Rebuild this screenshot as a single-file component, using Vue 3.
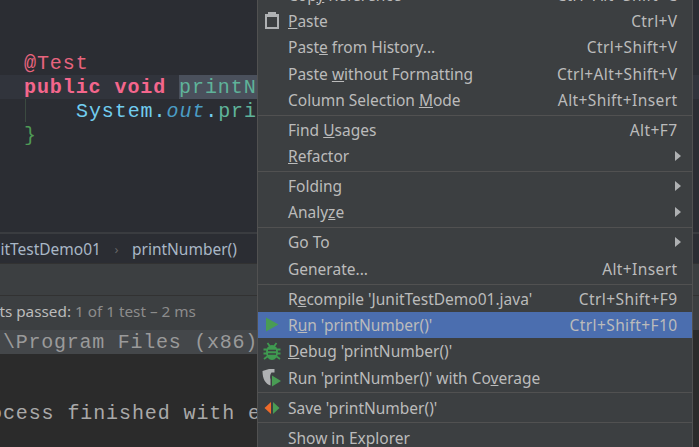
<script setup>
const groups = [
  [
    { pre: 'Cop', u: 'y', post: ' Reference', key: 'Ctrl+Alt+Shift+C' },
    { pre: '', u: 'P', post: 'aste', key: 'Ctrl+V', icon: 'paste' },
    { pre: 'Past', u: 'e', post: ' from History...', key: 'Ctrl+Shift+V' },
    { pre: 'Paste ', u: 'w', post: 'ithout Formatting', key: 'Ctrl+Alt+Shift+V' },
    { pre: 'Column Selection ', u: 'M', post: 'ode', key: 'Alt+Shift+Insert' },
  ],
  [
    { pre: 'Find ', u: 'U', post: 'sages', key: 'Alt+F7' },
    { pre: '', u: 'R', post: 'efactor', arrow: true },
  ],
  [
    { pre: 'Folding', u: '', post: '', arrow: true },
    { pre: 'Analy', u: 'z', post: 'e', arrow: true },
  ],
  [
    { pre: 'Go To', u: '', post: '', arrow: true },
    { pre: 'Generate...', u: '', post: '', key: 'Alt+Insert' },
  ],
  [
    { pre: 'R', u: 'e', post: "compile 'JunitTestDemo01.java'", key: 'Ctrl+Shift+F9' },
    { pre: 'R', u: 'u', post: "n 'printNumber()'", key: 'Ctrl+Shift+F10', icon: 'run', active: true },
    { pre: '', u: 'D', post: "ebug 'printNumber()'", icon: 'debug' },
    { pre: "Run 'printNumber()' with Co", u: 'v', post: 'erage', icon: 'coverage' },
  ],
  [{ pre: "Save 'printNumber()'", u: '', post: '', icon: 'save' }],
  [{ pre: 'Show in Explorer', u: '', post: '' }],
]
</script>

<template>
  <div class="ide">
    <section class="editor">
      <div class="code-line"><span class="anno">@Test</span></div>
      <div class="code-line current">
        <span class="kw">public void </span><span class="method">printN</span>
      </div>
      <div class="code-line indent">
        <span class="cls">System.</span><span class="field">out</span><span class="cls">.</span><span class="method">pri</span>
      </div>
      <div class="code-line"><span class="brace">}</span></div>
    </section>
    <div class="gutter"></div>
    <div class="crumbs">
      <span>JunitTestDemo01</span>
      <span class="crumb-sep">›</span>
      <span>printNumber()</span>
    </div>
    <div class="toolbar"></div>
    <div class="status">
      <span>Tests passed:</span>
      <span class="status-rest">&nbsp;1 of 1 test – 2 ms</span>
    </div>
    <div class="cmd"><span>\Program Files (x86)</span></div>
    <div class="console"><span>ocess finished with e</span></div>

    <nav class="menu">
      <div v-for="(group, g) in groups" :key="g" class="group">
        <div v-for="item in group" :key="item.pre + item.post" class="row" :class="{ active: item.active }">
          <span class="icon">
            <svg v-if="item.icon === 'paste'" width="14" height="17" viewBox="0 0 14 17">
              <path fill="#afb1b3" d="M0 2h3V0h8v2h3v15H0z" />
              <rect x="2" y="5" width="10" height="10" fill="#3c3f41" />
            </svg>
            <svg v-else-if="item.icon === 'run'" width="14" height="15" viewBox="0 0 14 15">
              <path fill="#499c54" d="M1 0.500L13.500 7.500 1 14.500z" />
            </svg>
            <svg v-else-if="item.icon === 'debug'" width="18" height="19" viewBox="0 0 18 19">
              <path fill="none" stroke="#3f9a50" stroke-width="1.800" d="M4.500 1l2.500 3.500M13.500 1L11 4.500M0.500 7.500h4M13.500 7.500h4M0.500 11.500h4M13.500 11.500h4M1 17l4-3M17 17l-4-3" />
              <ellipse cx="9" cy="10.500" rx="6" ry="7.500" fill="#3f9a50" />
              <path fill="none" stroke="#3c3f41" stroke-width="1.400" d="M5 8.500h8M5 12h8" />
            </svg>
            <svg v-else-if="item.icon === 'coverage'" width="20" height="18" viewBox="0 0 20 18">
              <path fill="#afb1b3" d="M0.500 2L7 0h5.500v3.500H9.500C8 5 7.800 8.500 8.500 10.500V16.500C3.500 15 0.500 10 0.500 2z" />
              <path fill="#499c54" d="M10 6.500l9 5.500-9 5.500z" />
            </svg>
            <svg v-else-if="item.icon === 'save'" width="16" height="12" viewBox="0 0 16 12">
              <path fill="#ee6a2a" d="M7 0v12L0.500 6z" />
              <path fill="#499c54" d="M9 0v12L15.500 6z" />
            </svg>
          </span>
          <span class="label">{{ item.pre }}<u v-if="item.u">{{ item.u }}</u>{{ item.post }}</span>
          <span v-if="item.key" class="key">{{ item.key }}</span>
          <span v-if="item.arrow" class="arrow"></span>
        </div>
      </div>
    </nav>
  </div>
</template>

<style scoped>
.ide {
  position: relative;
  width: 699px;
  height: 447px;
  overflow: hidden;
  background: #2b2b2b;
  display: flex;
  flex-direction: column;
  font-family: "Noto Sans", sans-serif;
}
.editor {
  height: 232px;
  flex: none;
  box-sizing: border-box;
  padding-top: 51px;
  background: #2b2d33;
  font-family: "Liberation Mono", monospace;
  font-size: 20px;
  letter-spacing: 0.92px;
}
.code-line {
  position: relative;
  height: 24px;
  line-height: 26px;
  padding-left: 24px;
  white-space: pre;
}
.current { background: #31343c; }
.indent { padding-left: 76px; }
.indent::before {
  content: "";
  position: absolute;
  left: 25px;
  top: 0;
  width: 1px;
  height: 23px;
  background: #3b4a40;
}
.anno { color: #e8647e; }
.kw { color: #f4668c; font-weight: 700; }
.method { color: #5fb39a; }
.current .method {
  display: inline-block;
  height: 24px;
  background: #4a505c;
}
.cls { color: #72cdf0; }
.field { color: #4a9cc4; font-style: italic; }
.brace { color: #4f9a56; }
.gutter { height: 2px; flex: none; background: #3a3c40; }
.crumbs {
  height: 29px;
  flex: none;
  display: flex;
  align-items: center;
  gap: 13.5px;
  margin-left: -23px;
  background: #2b2d33;
  color: #a9b7c6;
  font-size: 15.5px;
}
.crumb-sep { color: #666; font-size: 13px; }
.toolbar { height: 32px; box-sizing: border-box; flex: none; background: #3c3f41; border-top: 1px solid #323232; }
.status {
  height: 35px;
  box-sizing: border-box;
  flex: none;
  display: flex;
  align-items: center;
  background: #3c3f41;
  border-top: 1px solid #323232;
  color: #bbbbbb;
  font-size: 15.3px;
  margin-left: -24px;
  padding-bottom: 5px;
}
.status-rest { color: #8c8c8c; }
.cmd {
  width: 640px;
  height: 24px;
  box-sizing: border-box;
  flex: none;
  background: #44474a;
  font-family: "Liberation Mono", monospace;
  font-size: 20px;
  letter-spacing: 0.75px;
  line-height: 26px;
  color: #9a9a9a;
  white-space: pre;
  padding-left: 3px;
}
.console {
  flex: 1;
  padding-top: 48px;
  font-family: "Liberation Mono", monospace;
  font-size: 20px;
  letter-spacing: 0.9px;
  color: #a9a9a9;
  white-space: pre;
  margin-left: -10px;
}
.menu {
  position: absolute;
  left: 257px;
  top: -18.5px;
  width: 436px;
  background: #3c3f41;
  border-left: 1px solid #515151;
  border-right: 1px solid #515151;
  box-sizing: border-box;
  color: #bbbbbb;
  font-size: 15.5px;
}
.group + .group {
  margin-top: 1.7px;
  border-top: 1px solid #515151;
  padding-top: 1px;
}
.row {
  height: 26.3px;
  display: flex;
  align-items: center;
  white-space: pre;
}
.row.active { background: #4b6eaf; }
.icon {
  width: 30px;
  flex: none;
  display: flex;
  justify-content: center;
  align-items: center;
  padding-right: 2px;
  box-sizing: border-box;
}
.label { flex: 1; }
.key { padding-right: 14.5px; letter-spacing: 0.4px; }
.arrow {
  margin-right: 11px;
  width: 0;
  height: 0;
  border-left: 6px solid #afb1b3;
  border-top: 5.5px solid transparent;
  border-bottom: 5.5px solid transparent;
}
</style>
